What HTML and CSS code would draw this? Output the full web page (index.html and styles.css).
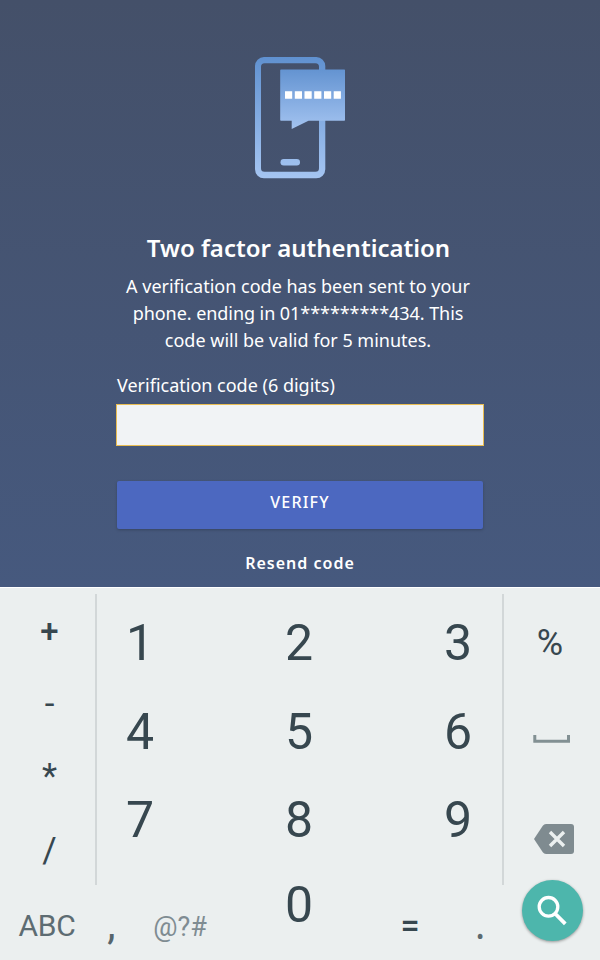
FILE: index.html
```html
<!DOCTYPE html>
<html lang="en">
<head>
<meta charset="utf-8">
<title>Two factor authentication</title>
<link rel="stylesheet" href="styles.css">
</head>
<body>
<main class="auth">
  <svg class="hero" width="92" height="124" viewBox="0 0 92 124" aria-hidden="true">
    <defs>
      <linearGradient id="phone" gradientUnits="userSpaceOnUse" x1="0" y1="1" x2="0" y2="122"><stop offset="0" stop-color="#6091d0"/><stop offset="1" stop-color="#a5c5f2"/></linearGradient>
      <linearGradient id="bubble" gradientUnits="userSpaceOnUse" x1="0" y1="13" x2="0" y2="73"><stop offset="0" stop-color="#6393d1"/><stop offset="1" stop-color="#a3c3f0"/></linearGradient>
    </defs>
    <path fill="url(#phone)" fill-rule="evenodd" d="M10 1H62.300a9 9 0 0 1 9 9V113.300a9 9 0 0 1-9 9H10a9 9 0 0 1-9-9V10a9 9 0 0 1 9-9ZM10.500 7.200a3.500 3.500 0 0 0-3.500 3.500V112.200a3.500 3.500 0 0 0 3.500 3.500H61.500a3.500 3.500 0 0 0 3.500-3.500V10.700a3.500 3.500 0 0 0-3.500-3.500Z"/>
    <rect x="26.500" y="103" width="19.500" height="6.500" rx="3.250" fill="url(#phone)"/>
    <path fill="url(#bubble)" d="M27 13.400H90.300a.7.7 0 0 1 .7.7V64a.7.7 0 0 1-.7.7H54.500L37.700 73V64.700H27a.8.8 0 0 1-.8-.8V14.200a.8.800 0 0 1 .8-.8Z"/>
    <path fill="#fff" d="M31 35.300h7.200v7.400H31zM40.800 35.300H48v7.400h-7.200zM50.500 35.300h7.200v7.400h-7.200zM60.200 35.300h7.200v7.400h-7.200zM70 35.300h7.200v7.400H70zM79.700 35.300h7.200v7.400h-7.200z"/>
  </svg>
  <h1 class="title">Two factor authentication</h1>
  <p class="message">A verification code has been sent to your<br><span class="tight">phone. ending in 01*********434. This</span><br>code will be valid for 5 minutes.</p>
  <form class="form">
    <label class="label" for="code">Verification code (6 digits)</label>
    <input class="code" id="code" type="text" inputmode="numeric" maxlength="6">
    <button class="verify" type="button">VERIFY</button>
    <button class="resend" type="button">Resend code</button>
  </form>
</main>
<section class="keyboard">
  <div class="keys">
    <div class="operators"><span class="plus">+</span><span>-</span><span>*</span><span class="slash">/</span></div>
    <div class="digits"><span>1</span><span>2</span><span>3</span><span>4</span><span>5</span><span>6</span><span>7</span><span>8</span><span>9</span></div>
    <div class="actions">
      <span class="percent">%</span>
      <svg class="space" width="38" height="10" viewBox="0 0 38 10"><path d="M1.800 1V7.200H35.500V1" fill="none" stroke="#829093" stroke-width="3"/></svg>
      <svg class="backspace" width="42" height="32" viewBox="0 0 42 32"><path d="M13 1H38a3 3 0 0 1 3 3V28a3 3 0 0 1-3 3H13Q11 31 9.800 29.300L1 16 9.800 2.700Q11 1 13 1Z" fill="#7f8b90"/><path d="M17 9 31 23M31 9 17 23" stroke="#ebefef" stroke-width="3.400"/></svg>
    </div>
  </div>
  <div class="bottom">
    <span class="abc">ABC</span>
    <span class="comma">,</span>
    <span class="symbols">@?#</span>
    <span class="zero">0</span>
    <span class="equals">=</span>
    <span class="period">.</span>
    <button class="search" type="button" aria-label="Search">
      <svg width="31" height="31" viewBox="0 0 31 31"><circle cx="11.500" cy="11.800" r="9.300" fill="none" stroke="#fff" stroke-width="3.300"/><path d="M18 18.500 28.300 28.800" stroke="#fff" stroke-width="3.800"/></svg>
    </button>
  </div>
</section>
</body>
</html>
```
FILE: styles.css
```css
* { box-sizing: border-box; }

body {
  margin: 0;
  width: 600px;
  height: 960px;
  overflow: hidden;
  display: flex;
  flex-direction: column;
  font-family: "Noto Sans", sans-serif;
}

button {
  border: 0;
  padding: 0;
  font-family: inherit;
}

svg { display: block; }

.auth {
  height: 587px;
  padding-top: 56px;
  display: flex;
  flex-direction: column;
  align-items: center;
  color: #fff;
  background: linear-gradient(#445069, #46597e);
}

.title {
  margin: 52px 0 0;
  padding-right: 3px;
  font-size: 24px;
  font-weight: 600;
  line-height: 32px;
}

.message {
  margin: 9px 0 0;
  padding-right: 4px;
  font-size: 18px;
  line-height: 27px;
  text-align: center;
}

.tight { letter-spacing: -0.06px; }

.form {
  width: 368px;
  margin-top: 18px;
  display: flex;
  flex-direction: column;
}

.label {
  padding-left: 1px;
  font-size: 18px;
  line-height: 27px;
}

.code {
  height: 42px;
  margin-top: 5px;
  border: 1px solid #e9bd52;
  border-radius: 0;
  background: #f1f3f5;
  outline: none;
}

.verify {
  height: 48px;
  margin: 35px 1px 0;
  padding-bottom: 6px;
  border-radius: 2px;
  background: #4c68c0;
  color: #fff;
  font-size: 16px;
  font-weight: 500;
  letter-spacing: 1.2px;
  box-shadow: 0 1px 3px rgba(0, 0, 0, 0.22);
}

.resend {
  height: 24px;
  margin-top: 22px;
  background: none;
  color: #fff;
  font-size: 16px;
  font-weight: 600;
  letter-spacing: 1px;
}

.keyboard {
  height: 373px;
  border-top: 1px solid #fff;
  background: #ebefef;
  color: #37474f;
  font-family: Roboto, sans-serif;
}

.keys {
  height: 297px;
  padding-top: 6px;
  display: grid;
  grid-template-columns: 97px 405px 98px;
}

.operators {
  padding: 1px 0 0 4px;
  border-right: 2px solid #d2d7d8;
  display: grid;
  grid-template-rows: repeat(4, 1fr);
  place-items: center;
  font-size: 35px;
}

.plus {
  font-size: 33px;
  font-weight: 500;
}

.slash { padding-top: 3px; }

.digits {
  padding: 5px 1px 0 0;
  display: grid;
  grid-template-columns: repeat(3, 86px);
  grid-template-rows: repeat(3, 88.500px);
  justify-content: space-between;
  place-items: center;
  font-size: 50px;
  line-height: 1;
}

.actions {
  border-left: 2px solid #d2d7d8;
  display: grid;
  grid-template-rows: repeat(3, 1fr);
  place-items: center;
}

.percent {
  padding-right: 4px;
  font-size: 36px;
}

.space { margin-bottom: 2px; }

.backspace { margin: 4px 0 0 3px; }

.bottom {
  height: 75px;
  display: grid;
  grid-template-columns: 94px 35px 102px 136px 86px 54px 90px;
  justify-items: center;
  align-items: start;
}

.abc {
  margin-top: 23px;
  font-size: 30px;
  line-height: 36px;
  letter-spacing: -0.2px;
  color: #5d6c72;
}

.comma {
  margin-top: 16px;
  font-size: 42px;
  line-height: 48px;
  color: #56656c;
}

.symbols {
  margin-top: 26px;
  font-size: 27px;
  line-height: 32px;
  color: #7f8c92;
}

.zero {
  margin-top: -5px;
  font-size: 50px;
  line-height: 50px;
}

.equals {
  margin-top: 20px;
  font-size: 34px;
  font-weight: 500;
  line-height: 40px;
}

.period {
  margin-top: 14px;
  font-family: "Noto Sans", sans-serif;
  font-size: 38px;
  line-height: 50px;
  color: #5c6a70;
}

.search {
  width: 61px;
  height: 61px;
  margin-top: -5px;
  display: grid;
  place-items: center;
  border-radius: 50%;
  background: #4db6ac;
  box-shadow: 0 1px 3px rgba(0, 0, 0, 0.38);
}
```
